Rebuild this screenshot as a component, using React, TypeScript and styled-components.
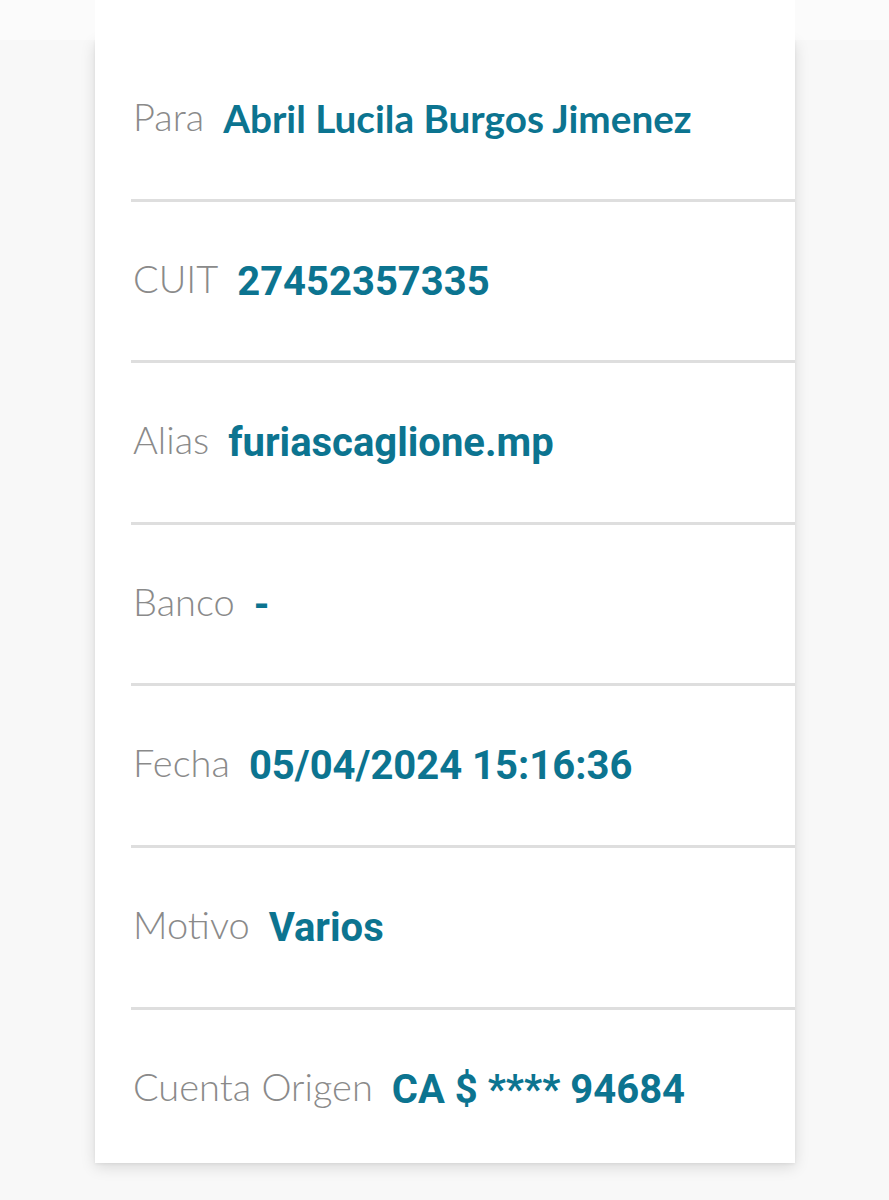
import React from "react";
import styled, { createGlobalStyle } from "styled-components";

const Global = createGlobalStyle`
  html, body { margin: 0; padding: 0; background: #f8f8f8; }
  body { font-family: "Lato", "Noto Sans", sans-serif; -webkit-font-smoothing: antialiased; }
`;

const Page = styled.div`
  width: 889px;
  min-height: 1200px;
  background: #f8f8f8;
  overflow: hidden;
`;

const TopStrip = styled.div`
  height: 40px;
  background: #fbfbfb;
  display: flex;
  padding-left: 95px;
`;

const TopCardEdge = styled.div`
  width: 700px;
  background: #ffffff;
`;

const Card = styled.div`
  margin-left: 95px;
  width: 700px;
  background: #ffffff;
  box-shadow: 0 4px 14px rgba(0, 0, 0, 0.13), 0 1px 3px rgba(0, 0, 0, 0.06);
  padding-left: 36px;
  box-sizing: border-box;
`;

const Row = styled.div<{ $last?: boolean }>`
  box-sizing: border-box;
  height: ${(p) => (p.$last ? "153px" : "161.6px")};
  border-bottom: ${(p) => (p.$last ? "none" : "3px solid #dedede")};
  display: flex;
  align-items: baseline;
  gap: 19px;
  padding-top: 56px;
  padding-left: 2px;
`;

const Label = styled.span`
  font-family: "Lato", "Noto Sans", sans-serif;
  font-weight: 300;
  font-size: 38px;
  line-height: 40px;
  color: #8a8a8a;
`;

const Value = styled.span<{ $humanist?: boolean }>`
  font-family: ${(p) => (p.$humanist ? `"Lato", "Noto Sans", sans-serif` : `"Roboto", "Noto Sans", sans-serif`)};
  font-weight: 700;
  font-size: ${(p) => (p.$humanist ? "38.7px" : "40px")};
  line-height: 40px;
  color: #0c7490;
  position: relative;
  top: 2px;
`;

const rows: { label: string; value: string; humanist?: boolean }[] = [
  { label: "Para", value: "Abril Lucila Burgos Jimenez", humanist: true },
  { label: "CUIT", value: "27452357335" },
  { label: "Alias", value: "furiascaglione.mp" },
  { label: "Banco", value: "-" },
  { label: "Fecha", value: "05/04/2024 15:16:36" },
  { label: "Motivo", value: "Varios" },
  { label: "Cuenta Origen", value: "CA $ **** 94684" },
];

export default function App() {
  return (
    <Page>
      <Global />
      <TopStrip>
        <TopCardEdge />
      </TopStrip>
      <Card>
        {rows.map((r, i) => (
          <Row key={r.label} $last={i === rows.length - 1}>
            <Label>{r.label}</Label>
            <Value $humanist={r.humanist}>{r.value}</Value>
          </Row>
        ))}
      </Card>
    </Page>
  );
}
